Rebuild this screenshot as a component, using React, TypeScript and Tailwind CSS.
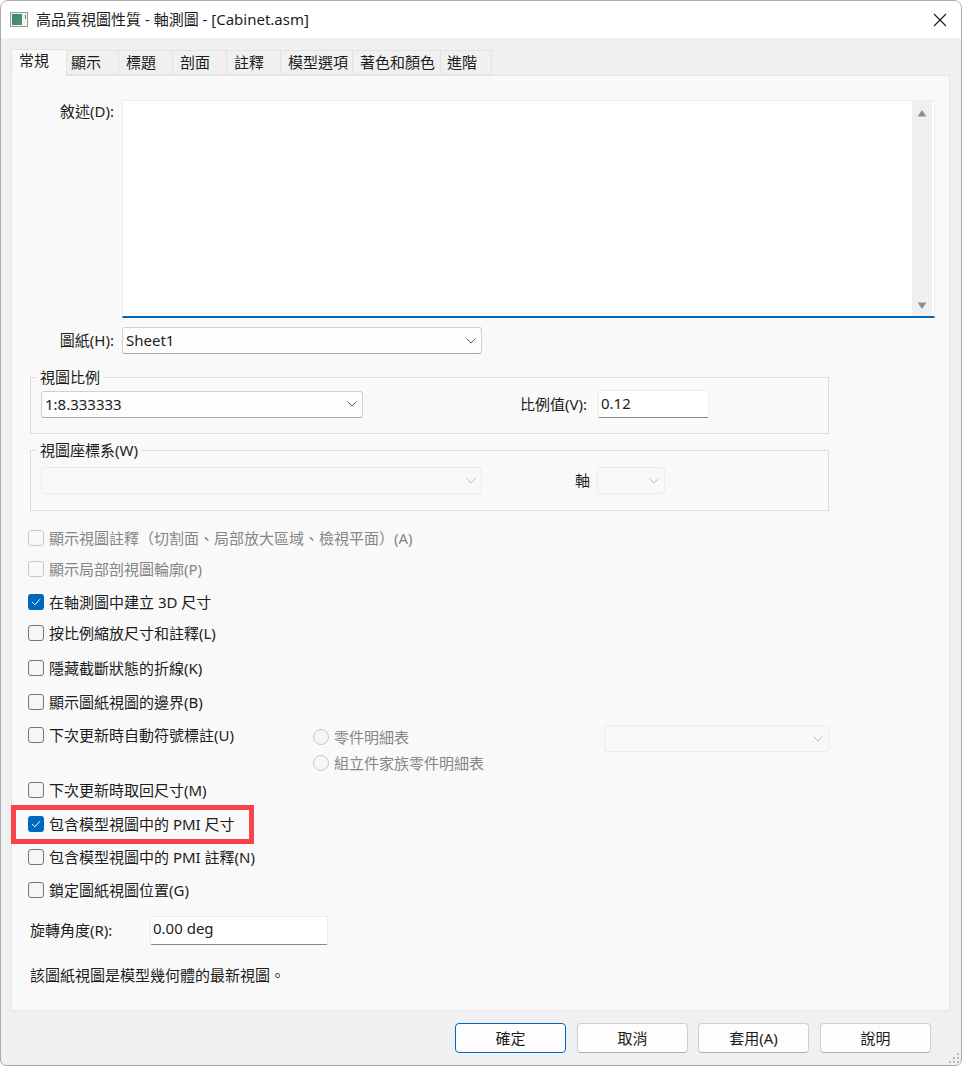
import React from 'react';

const tabs = [
  { label: '顯示', w: 'w-[52px]', pl: 'pl-[4px]' },
  { label: '標題', w: 'w-[54px]', pl: 'pl-[7px]' },
  { label: '剖面', w: 'w-[54px]', pl: 'pl-[7px]' },
  { label: '註釋', w: 'w-[54px]', pl: 'pl-[7px]' },
  { label: '模型選項', w: 'w-[72px]', pl: 'pl-[7px]' },
  { label: '著色和顏色', w: 'w-[88px]', pl: 'pl-[7px]' },
  { label: '進階', w: 'w-[51px]', pl: 'pl-[6px]' },
];

function Chevron({ disabled }: { disabled?: boolean }) {
  return (
    <svg width="10" height="6" viewBox="0 0 10 6" className="shrink-0">
      <path d="M0.5 0.5 L5 5 L9.5 0.5" fill="none" stroke={disabled ? '#bdbdbd' : '#5a5a5a'} strokeWidth="1" />
    </svg>
  );
}

function Select({ value, w, disabled }: { value?: string; w: string; disabled?: boolean }) {
  return (
    <div className={`${w} h-[27px] shrink-0 flex items-center justify-between pl-[3px] pr-[5px] rounded-[3px] border ${disabled ? 'border-[#ececec] bg-[#f9f9f9]' : 'border-[#d0d0d0] border-b-[#a8a8a8] bg-[#fdfdfd]'}`}>
      <span className="leading-none">{value}</span>
      <Chevron disabled={disabled} />
    </div>
  );
}

function Check({ label, checked, disabled, mt }: { label: string; checked?: boolean; disabled?: boolean; mt: string }) {
  return (
    <div className={`${mt} h-5 flex items-center ml-4 ${disabled ? 'text-[#858585]' : ''}`}>
      <div className={`w-4 h-4 shrink-0 rounded-[3px] flex items-center justify-center ${checked ? 'bg-[#0067c0]' : disabled ? 'border border-[#c8c8c8] bg-[#f9f9f9]' : 'border border-[#757575] bg-[#f6f6f6]'}`}>
        {checked && (
          <svg width="10" height="8" viewBox="0 0 10 8">
            <path d="M1 4 L3.8 6.8 L9 1.2" fill="none" stroke="#fff" strokeWidth="1" />
          </svg>
        )}
      </div>
      <span className="ml-[5px] whitespace-nowrap">{label}</span>
    </div>
  );
}

function Radio({ label, mt }: { label: string; mt: string }) {
  return (
    <div className={`${mt} flex items-center h-5 text-[#858585]`}>
      <div className="w-4 h-4 shrink-0 rounded-full border border-[#c8c8c8] bg-[#f6f6f6]" />
      <span className="ml-[5px] whitespace-nowrap">{label}</span>
    </div>
  );
}

function Arrow({ up }: { up?: boolean }) {
  return (
    <svg width="10" height="8" viewBox="0 0 10 8">
      <path d={up ? 'M5 1 L9.5 7.5 L0.5 7.5 Z' : 'M5 7 L9.5 0.5 L0.5 0.5 Z'} fill="#8f8f8f" />
    </svg>
  );
}

function Button({ label, primary, ml }: { label: string; primary?: boolean; ml?: string }) {
  return (
    <button className={`${ml ?? ''} w-[111px] h-[30px] rounded-[4px] bg-[#fdfdfd] border ${primary ? 'border-[#0067c0]' : 'border-[#cfcfcf] border-b-[#b0b0b0]'}`}>
      {label}
    </button>
  );
}

export default function App() {
  return (
    <div lang="zh-Hant" className="w-[962px] h-[1066px] bg-white [font-family:'Noto_Sans','Noto_Sans_CJK_TC',sans-serif] text-[15px] text-[#1c1c1c]">
      <div className="relative h-full flex flex-col rounded-t-[8px] rounded-b-[6px] border border-[#ababab] bg-[#f0f0f0] overflow-hidden">
        {/* Title bar */}
        <div className="h-[37px] shrink-0 bg-white flex items-center pl-[9px] pr-[14px]">
          <svg width="19" height="15" viewBox="0 0 19 15" className="shrink-0">
            <rect x="0.5" y="0.5" width="17" height="14" fill="#f4f4f4" stroke="#9a9a9a" />
            <defs>
              <linearGradient id="ico" x1="0" y1="0" x2="1" y2="1">
                <stop offset="0" stopColor="#3a7f8c" />
                <stop offset="1" stopColor="#4f9a5a" />
              </linearGradient>
            </defs>
            <rect x="2" y="2" width="10" height="11" fill="url(#ico)" />
            <rect x="15" y="3" width="1" height="4" fill="#4f9a5a" />
          </svg>
          <span className="ml-[7px]">高品質視圖性質 - 軸測圖 - [Cabinet.asm]</span>
          <svg width="14" height="14" viewBox="0 0 14 14" className="ml-auto">
            <path d="M1 1 L13 13 M13 1 L1 13" stroke="#1a1a1a" strokeWidth="1.1" fill="none" />
          </svg>
        </div>

        {/* Tabs */}
        <div className="h-[37px] shrink-0 flex items-end pl-[10px]">
          <div className="w-[56px] h-[27px] -mb-px z-10 bg-[#f9f9f9] border border-[#e2e2e2] border-b-0 pl-[7px] leading-[20px]">常規</div>
          {tabs.map(t => (
            <div key={t.label} className={`${t.w} ${t.pl} h-[25px] bg-[#f0f0f0] border border-l-0 border-[#e2e2e2] leading-[22px] whitespace-nowrap`}>
              {t.label}
            </div>
          ))}
        </div>

        {/* Panel */}
        <div className="mx-[10px] w-[939px] h-[936px] shrink-0 bg-[#f9f9f9] border border-[#e6e6e6] flex flex-col">
          <div className="mt-6 flex">
            <div className="w-[102px] text-right leading-[22px]">敘述(D):</div>
            <div className="ml-2 w-[813px] h-[218px] bg-white border-x border-t border-[#ececec] border-b-2 border-b-[#0067c0] flex justify-end pr-[2px]">
              <div className="w-5 h-full bg-[#f0f0f0] flex flex-col items-center justify-between pt-2 pb-[6px]">
                <Arrow up />
                <Arrow />
              </div>
            </div>
          </div>

          <div className="mt-[9px] flex items-center">
            <div className="w-[102px] text-right">圖紙(H):</div>
            <div className="ml-2"><Select value="Sheet1" w="w-[360px]" /></div>
          </div>

          <fieldset className="mt-[13px] ml-[18px] w-[799px] h-[67px] border border-[#dcdcdc]">
            <legend className="ml-[5px] px-1 h-5 leading-5">視圖比例</legend>
            <div className="pt-[3px] pl-[10px] flex items-center">
              <Select value="1:8.333333" w="w-[322px]" />
              <div className="ml-[157px] w-[70px] whitespace-nowrap">比例值(V):</div>
              <div className="ml-2 w-[111px] h-[28px] bg-white border border-[#ececec] border-b-[#8a8a8a] rounded-[2px] pl-[2px] leading-[24px]">0.12</div>
            </div>
          </fieldset>

          <fieldset className="mt-[6px] ml-[18px] w-[799px] h-[71px] border border-[#dcdcdc]">
            <legend className="ml-[5px] px-1 h-5 leading-5">視圖座標系(W)</legend>
            <div className="pt-[7px] pl-[10px] flex items-center">
              <Select w="w-[441px]" disabled />
              <div className="ml-[93px] w-[15px]">軸</div>
              <div className="ml-[7px]"><Select w="w-[68px]" disabled /></div>
            </div>
          </fieldset>

          <Check mt="mt-[17px]" disabled label="顯示視圖註釋（切割面、局部放大區域、檢視平面）(A)" />
          <Check mt="mt-[11px]" disabled label="顯示局部剖視圖輪廓(P)" />
          <Check mt="mt-[13px]" checked label="在軸測圖中建立 3D 尺寸" />
          <Check mt="mt-[11px]" label="按比例縮放尺寸和註釋(L)" />
          <Check mt="mt-[15px]" label="隱藏截斷狀態的折線(K)" />
          <Check mt="mt-[14px]" label="顯示圖紙視圖的邊界(B)" />

          <div className="mt-[13px] h-[46px] flex items-start">
            <div className="w-[301px] shrink-0">
              <Check mt="mt-0" label="下次更新時自動符號標註(U)" />
            </div>
            <div className="w-[291px] shrink-0 flex flex-col">
              <Radio mt="mt-[2px]" label="零件明細表" />
              <Radio mt="mt-[6px]" label="組立件家族零件明細表" />
            </div>
            <Select w="w-[225px]" disabled />
          </div>

          <Check mt="mt-[9px]" label="下次更新時取回尺寸(M)" />
          <div className="relative">
            <Check mt="mt-[14px]" checked label="包含模型視圖中的 PMI 尺寸" />
            {/* red annotation frame */}
            <div className="absolute -left-px top-[5px] w-[243px] h-[39px] border-[5px] border-[#f8434a]" />
          </div>
          <Check mt="mt-[13px]" label="包含模型視圖中的 PMI 註釋(N)" />
          <Check mt="mt-[13px]" label="鎖定圖紙視圖位置(G)" />

          <div className="mt-[16px] ml-[18px] flex items-center">
            <div className="w-[120px]">旋轉角度(R):</div>
            <div className="w-[178px] h-[29px] bg-white border border-[#ececec] border-b-[#8a8a8a] rounded-[2px] pl-[2px] leading-[23px]">0.00 deg</div>
          </div>

          <div className="mt-[20px] ml-[18px] leading-5">該圖紙視圖是模型幾何體的最新視圖。</div>
        </div>

        {/* Footer buttons */}
        <div className="flex-1 flex pt-[12px] pl-[454px] relative">
          <Button label="確定" primary />
          <Button label="取消" ml="ml-[11px]" />
          <Button label="套用(A)" ml="ml-[10px]" />
          <Button label="說明" ml="ml-[11px]" />
          {/* resize grip */}
          <svg width="14" height="14" viewBox="0 0 14 14" className="absolute right-0 bottom-0">
            <g fill="#b5b5b5">
              <rect x="10" y="2" width="2" height="2" />
              <rect x="6" y="6" width="2" height="2" />
              <rect x="10" y="6" width="2" height="2" />
              <rect x="2" y="10" width="2" height="2" />
              <rect x="6" y="10" width="2" height="2" />
              <rect x="10" y="10" width="2" height="2" />
            </g>
          </svg>
        </div>
      </div>
    </div>
  );
}
